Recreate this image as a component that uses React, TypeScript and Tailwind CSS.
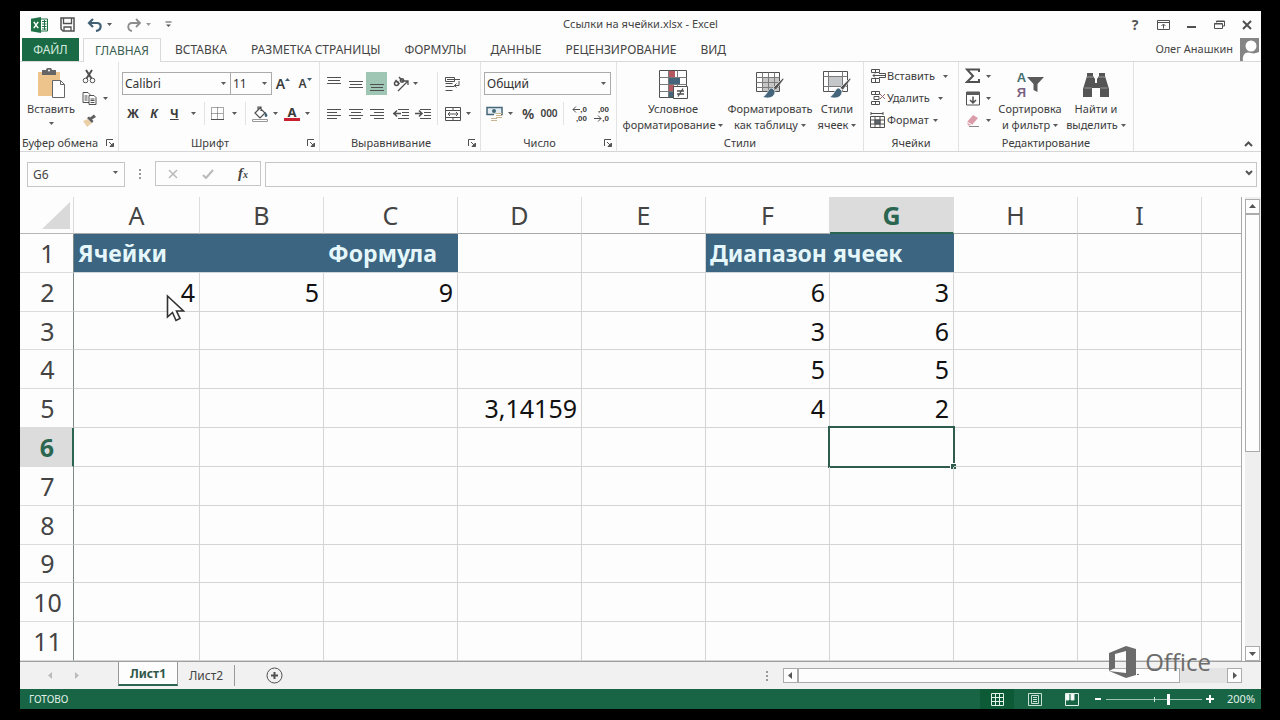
import React from 'react';
import clsx from 'clsx';

const Caret = ({ className }: { className?: string }) => (
  <svg viewBox="0 0 5 3" className={clsx('h-[3px] w-[5px] shrink-0 fill-[#5a5a5a]', className)}>
    <path d="M0 0h5L2.5 3z" />
  </svg>
);

const Icon = ({ w = 16, h = 16, children }: { w?: number; h?: number; children: React.ReactNode }) => (
  <svg width={w} height={h} viewBox={`0 0 ${w} ${h}`} fill="none" stroke="#505050" className="shrink-0">
    {children}
  </svg>
);

interface ToolProps {
  label: string;
  className?: string;
  caret?: boolean;
  compact?: boolean;
  children: React.ReactNode;
}

const Tool = ({ label, className, caret, compact, children }: ToolProps) => (
  <button
    type="button"
    aria-label={label}
    className={clsx(
      'flex shrink-0 items-center',
      compact ? 'h-[22px]' : 'h-[23px]',
      caret ? 'justify-between' : 'justify-center',
      className ?? 'w-[22px]',
    )}
  >
    {children}
    {caret && <Caret />}
  </button>
);

const Divider = () => <span className="h-[23px] w-px shrink-0 bg-[#e3e3e3]" />;

interface GroupProps {
  label: string;
  className: string;
  launcher?: boolean;
  children: React.ReactNode;
}

const Group = ({ label, className, launcher, children }: GroupProps) => (
  <section aria-label={label} className={clsx('relative flex shrink-0 flex-col border-r border-[#e2e2e2]', className)}>
    <div className="flex-1">{children}</div>
    <div className={clsx('flex h-4 items-center justify-center whitespace-nowrap', launcher && 'pr-[18px]')}>{label}</div>
    {launcher && (
      <button type="button" aria-label={`${label}: параметры`} className="absolute right-1 bottom-1">
        <Icon w={8} h={8}>
          <path d="M.5 7V.5H7M3 3l3 3" />
          <path d="M7.500 4v3.500H4z" fill="#5a5a5a" />
        </Icon>
      </button>
    )}
  </section>
);

const Combo = ({ label, value, className }: { label: string; value: string; className: string }) => (
  <div className={clsx('relative h-[23px] shrink-0', className)}>
    <select
      aria-label={label}
      className="h-full w-full appearance-none border border-[#ababab] bg-[#fdfdfd] pl-[2px] text-[12px] text-[#333] outline-none"
    >
      <option>{value}</option>
    </select>
    <Caret className="pointer-events-none absolute top-[10px] right-[5px]" />
  </div>
);

const BigButton = ({ lines, caret, className, children }: { lines: [string, string]; caret?: boolean; className: string; children: React.ReactNode }) => (
  <button type="button" className={clsx('flex shrink-0 flex-col items-center whitespace-nowrap', className)}>
    <span className="flex h-8 items-center">{children}</span>
    <span className="leading-4">{lines[0]}</span>
    <span className="flex items-center gap-[3px] leading-4">
      {lines[1]}
      {caret && <Caret />}
    </span>
  </button>
);

const Lines = ({ rows }: { rows: [number, number, number][] }) => (
  <Icon w={14} h={14}>
    {rows.map(([y, x1, x2]) => (
      <path key={y} d={`M${x1} ${y}H${x2}`} />
    ))}
  </Icon>
);

const ExcelIcon = () => (
  <svg width="17" height="16" viewBox="0 0 17 16">
    <path d="M9 2h7.500v12H9z" fill="#fff" stroke="#1f7246" />
    <path d="M11 4.500h4.500M11 7h4.500M11 9.500h4.500M11 12h4.500M13.500 3v10" stroke="#1f7246" />
    <path d="M0 1.800 10 0v16L0 14.200z" fill="#1f7246" />
    <path d="m2.800 4.800 4.400 6.400M7.200 4.800l-4.400 6.400" stroke="#fff" strokeWidth="1.500" />
  </svg>
);

const TitleBar = () => (
  <header className="relative flex h-[27px] shrink-0 items-center justify-between">
    <div className="flex items-center pl-[11px]">
      <ExcelIcon />
      <button type="button" aria-label="Сохранить" className="ml-3">
        <Icon w={15} h={15}>
          <path d="M1 1h13v13H3l-2-2z" strokeWidth="1.500" />
          <path d="M3.500 1v5.500h8V1M4 14v-4h7v4" strokeWidth="1.300" />
        </Icon>
      </button>
      <button type="button" aria-label="Отменить" className="ml-3 flex items-center gap-1">
        <svg width="16" height="14" viewBox="0 0 16 14" fill="none" stroke="#3f6075" strokeWidth="2.200">
          <path d="M6 1 2 5l4 4M2.500 5H10c5 0 5 7-1 8" />
        </svg>
        <Caret />
      </button>
      <button type="button" aria-label="Вернуть" className="ml-[14px] flex items-center gap-1">
        <svg width="16" height="14" viewBox="0 0 16 14" fill="none" stroke="#8c8c8c" strokeWidth="1.800">
          <path d="m10 1 4 4-4 4M13.500 5H6C1 5 1 12 6 13" />
        </svg>
        <Caret className="opacity-60" />
      </button>
      <button type="button" aria-label="Настройка панели" className="ml-[14px]">
        <Icon w={7} h={7}>
          <path d="M.5 1h6" />
          <path d="M1 3.500h5L3.500 6z" fill="#5a5a5a" stroke="none" />
        </Icon>
      </button>
    </div>
    <h1 className="pointer-events-none absolute inset-x-0 text-center text-[11px] text-[#444]">Ссылки на ячейки.xlsx - Excel</h1>
    <div className="flex">
      <Tool label="Справка" className="w-7 text-[14px] font-bold text-[#555]">?</Tool>
      <Tool label="Параметры отображения ленты" className="w-7">
        <Icon w={13} h={10}>
          <path d="M.5.5h12v9H.5zM.5 2.500h12M6.500 8.500v-4M4.500 6l2-2 2 2" />
        </Icon>
      </Tool>
      <Tool label="Свернуть" className="w-7">
        <Icon w={9} h={8}><path d="M0 6h9" strokeWidth="2" /></Icon>
      </Tool>
      <Tool label="Восстановить" className="w-7">
        <Icon w={11} h={9}><path d="M2.500 2.500V1h8v5H8.500M.5 3.500h8v5h-8zM.5 4h8M2.500 1.500h8" /></Icon>
      </Tool>
      <Tool label="Закрыть" className="w-7">
        <Icon w={10} h={10}><path d="m1 1 8 8M9 1 1 9" strokeWidth="2" /></Icon>
      </Tool>
    </div>
  </header>
);

const tabs = ['ВСТАВКА', 'РАЗМЕТКА СТРАНИЦЫ', 'ФОРМУЛЫ', 'ДАННЫЕ', 'РЕЦЕНЗИРОВАНИЕ', 'ВИД'];

const RibbonTabs = () => (
  <nav className="flex h-6 shrink-0 items-stretch border-b border-[#d9d9d9] pl-[2px] text-[12px] text-[#444]">
    <button type="button" className="w-[57px] bg-[#1a6b45] text-[#d5eadf]">ФАЙЛ</button>
    <button type="button" className="mr-[2px] -mb-px ml-1 w-[78px] border border-b-0 border-[#d9d9d9] bg-[#fdfdfd] text-[#3b5f50]">ГЛАВНАЯ</button>
    {tabs.map((tab) => (
      <button key={tab} type="button" className="px-3">{tab}</button>
    ))}
    <div className="ml-auto flex items-center gap-[7px] pr-[2px] text-[11px]">
      Олег Анашкин
      <svg width="19" height="23" viewBox="0 0 19 23">
        <path d="M0 0h19v23H0z" fill="#858585" />
        <circle cx="11" cy="8" r="5.500" fill="#fff" />
        <path d="M3 23c-1-7 3-10 8-8 3 1 5 0 8-1v9z" fill="#fff" />
      </svg>
    </div>
  </nav>
);

const ClipboardGroup = () => (
  <Group label="Буфер обмена" className="w-[99px]" launcher>
    <div className="flex pt-[3px]">
      <button type="button" className="flex w-[62px] flex-col items-center pt-[3px]">
        <svg width="29" height="32" viewBox="0 0 29 32">
          <path d="M1 4h22v24H1z" fill="#ecc48c" />
          <path d="M5 2h4c0-3 6-3 6 0h4v5H5z" fill="#666" />
          <circle cx="12" cy="2.500" r="1" fill="#fff" />
          <path d="M15.500 12.500h8l4 4v13h-12z" fill="#fff" stroke="#666" />
          <path d="M23.500 12.500v4h4" fill="none" stroke="#666" />
        </svg>
        <span className="leading-[18px]">Вставить</span>
        <Caret className="mt-1" />
      </button>
      <div className="flex flex-col">
        <Tool label="Вырезать" className="w-[14px]" compact>
          <Icon w={14} h={15}>
            <path d="M4 1l5.500 8.500M10 1 4.500 9.500" strokeWidth="2" />
            <circle cx="3.500" cy="11.500" r="2.300" />
            <circle cx="10.500" cy="11.500" r="2.300" />
          </Icon>
        </Tool>
        <Tool label="Копировать" className="w-[26px]" caret compact>
          <Icon w={15} h={13}>
            <path d="M1 .5h5l2 2v8H1zM2.500 4h3M2.500 6h3M2.500 8h3" />
            <path d="M7 3.500h5l2 2v7H7z" fill="#fdfdfd" />
            <path d="M8.500 7h4M8.500 8.500h4M8.500 10.500h4" />
          </Icon>
        </Tool>
        <Tool label="Формат по образцу" className="w-[14px]" compact>
          <Icon w={15} h={13}>
            <path d="M1 7l5-2 4 4-5 4z" fill="#ecd0a8" stroke="none" />
            <path d="m5 4 5 5 1.500-2L10 5.500 14 3l-2-2.500-4 3L7 2.500z" fill="#5f5f5f" stroke="none" />
          </Icon>
        </Tool>
      </div>
    </div>
  </Group>
);

const FontGroup = () => (
  <Group label="Шрифт" className="w-[201px]" launcher>
    <div className="flex flex-col gap-[7px] pt-[10px] pl-[3px]">
      <div className="flex">
        <Combo label="Гарнитура" value="Calibri" className="w-[109px]" />
        <Combo label="Размер шрифта" value="11" className="-ml-px w-[42px]" />
        <Tool label="Увеличить размер">
          <span className="text-[14px] font-semibold">A</span>
          <Icon w={5} h={12}><path d="M0 3h5L2.500 0z" fill="#3f6075" stroke="none" /></Icon>
        </Tool>
        <Tool label="Уменьшить размер">
          <span className="text-[12px] font-semibold">A</span>
          <Icon w={5} h={12}><path d="M0 0h5L2.500 3z" fill="#3f6075" stroke="none" /></Icon>
        </Tool>
      </div>
      <div className="flex items-center text-[12px] font-bold">
        <Tool label="Полужирный">Ж</Tool>
        <Tool label="Курсив" className="w-5 italic">К</Tool>
        <Tool label="Подчеркнутый" className="ml-[6px] w-[26px] underline" caret>Ч</Tool>
        <span className="w-2" />
        <Divider />
        <Tool label="Границы" className="ml-[6px] w-[26px]" caret>
          <Icon w={13} h={13}>
            <path d="M.5.5h12v12H.5zM6.500.5v12M.5 6.500h12" strokeDasharray="1 1" />
            <path d="M0 12.500h13" />
          </Icon>
        </Tool>
        <span className="w-2" />
        <Divider />
        <Tool label="Цвет заливки" className="ml-[6px] w-[26px]" caret>
          <Icon w={17} h={16}>
            <path d="m3 7 5-5 5 5-5 5zM6 4V1h3v4" strokeWidth="1.200" />
            <path d="M13 6c3 2 3 5 1 5s-1-3-1-5z" fill="#3f6075" stroke="none" />
            <path d="M.5 13.500h15v2H.5z" fill="#fff" stroke="#999" />
          </Icon>
        </Tool>
        <Tool label="Цвет текста" className="ml-[6px] w-[26px]" caret>
          <span className="flex w-4 flex-col items-center">
            <span className="h-3 text-[13px] leading-3">А</span>
            <span className="h-[3px] w-4 bg-[#c8202f]" />
          </span>
        </Tool>
      </div>
    </div>
  </Group>
);

const AlignmentGroup = () => (
  <Group label="Выравнивание" className="w-[161px]" launcher>
    <div className="flex pt-[10px] pl-[3px]">
      <div className="flex flex-col gap-[7px]">
        <div className="flex">
          <Tool label="По верхнему краю"><Lines rows={[[0.5, 0, 14], [3.5, 1, 13], [6.5, 0, 14]]} /></Tool>
          <Tool label="По середине" className="w-[21px]"><Lines rows={[[4.5, 0, 14], [7.5, 1, 13], [10.5, 0, 14]]} /></Tool>
          <Tool label="По нижнему краю" className="w-[21px] bg-[#9fc6b5]"><Lines rows={[[7.5, 0, 14], [10.5, 1, 13], [13.5, 0, 14]]} /></Tool>
          <Tool label="Ориентация" className="ml-[6px] w-[25px]" caret>
            <Icon w={17} h={16}>
              <path d="M5 15 15 5M15 9V5h-4" strokeWidth="1.300" />
              <circle cx="3.500" cy="7.500" r="2" strokeWidth="1.500" />
              <path d="M2.500 4 6.500 8M6 1l4.500 5" strokeWidth="1.500" />
              <circle cx="9" cy="4.500" r="1.700" strokeWidth="1.500" />
            </Icon>
          </Tool>
        </div>
        <div className="flex">
          <Tool label="По левому краю"><Lines rows={[[2.5, 0, 14], [5.5, 0, 10], [8.5, 0, 14], [11.5, 0, 10]]} /></Tool>
          <Tool label="По центру" className="w-[21px]"><Lines rows={[[2.5, 0, 14], [5.5, 2, 12], [8.5, 0, 14], [11.5, 2, 12]]} /></Tool>
          <Tool label="По правому краю" className="w-[21px]"><Lines rows={[[2.5, 0, 14], [5.5, 4, 14], [8.5, 0, 14], [11.5, 4, 14]]} /></Tool>
          <Tool label="Уменьшить отступ" className="ml-[3px] w-[22px]">
            <Icon><path d="M5 3.500h11M9 6.500h7M9 9.500h7M5 12.500h11" /><path d="M0 7.500h8M4 4.500l-3 3 3 3" strokeWidth="1.500" /></Icon>
          </Tool>
          <Tool label="Увеличить отступ" className="w-[22px]">
            <Icon><path d="M5 3.500h11M9 6.500h7M9 9.500h7M5 12.500h11" /><path d="M0 7.500h7M4 4.500l3 3-3 3" strokeWidth="1.500" /></Icon>
          </Tool>
        </div>
      </div>
      <span className="ml-[3px] h-[53px] w-px bg-[#e3e3e3]" />
      <div className="ml-[7px] flex flex-col gap-[7px]">
        <Tool label="Перенести текст" className="w-4">
          <Icon>
            <path d="M.5 1.500h9v4h-9zM.5 7.500h7M.5 10.500h9M.5 14.500h7M2 3.500h13M9.500 9.500h4.500V5M11.500 7.500l-2 2 2 2" />
          </Icon>
        </Tool>
        <Tool label="Объединить" className="w-[26px]" caret>
          <Icon><path d="M.5 1.500h15v13H.5zM.5 4.500h15M.5 11.500h15M8 1.500v3M8 11.500v3M3 8h10M5 6 3 8l2 2M11 6l2 2-2 2" /></Icon>
        </Tool>
      </div>
    </div>
  </Group>
);

const NumberGroup = () => (
  <Group label="Число" className="w-[136px]" launcher>
    <div className="flex flex-col gap-[7px] pt-[10px] pl-[3px]">
      <Combo label="Числовой формат" value="Общий" className="w-[127px]" />
      <div className="flex items-center">
        <Tool label="Финансовый формат" className="ml-[2px] w-[27px]" caret>
          <Icon w={17} h={16}>
            <path d="M1 1.500h15v7H1z" fill="#e4eef2" stroke="#456779" strokeWidth="1.500" />
            <circle cx="8" cy="5" r="2" fill="#456779" stroke="none" />
            <path d="M8 8h7v7H8z" fill="#fdfdfd" stroke="none" />
            <path d="M10 7.500h6M10 9.500h6M10 11.500h6M5 12.500h6M5 14.500h6" stroke="#c9b591" />
          </Icon>
        </Tool>
        <Tool label="Процентный формат" className="ml-1 w-[22px] text-[14px] font-semibold">%</Tool>
        <Tool label="Формат с разделителями" className="w-5 text-[10px] font-semibold">000</Tool>
        <span className="w-1" />
        <Divider />
        <span className="w-1" />
        <Tool label="Увеличить разрядность">
          <span className="flex w-4 flex-col items-end font-['Liberation_Sans',sans-serif] text-[8px] leading-[9px] font-bold">
            <span className="flex items-center">
              <Icon w={8} h={7}><path d="M1 3.500h7M4 .5l-3 3 3 3" /></Icon>,0
            </span>
            <span>,00</span>
          </span>
        </Tool>
        <Tool label="Уменьшить разрядность">
          <span className="flex w-4 flex-col items-end font-['Liberation_Sans',sans-serif] text-[8px] leading-[9px] font-bold">
            <span>,00</span>
            <span className="flex items-center">
              <Icon w={8} h={7}><path d="M0 3.500h7M4 .5l3 3-3 3" /></Icon>,0
            </span>
          </span>
        </Tool>
      </div>
    </div>
  </Group>
);

const Brush = () => (
  <>
    <path d="m28 8-8 11-3-2L27 7z" fill="#555" stroke="#fdfdfd" strokeWidth=".6" />
    <path d="M16 17c-4 0-4 6-9 9 5 2 12 1 12-6z" fill="#44657a" stroke="#fdfdfd" strokeWidth=".6" />
  </>
);

const StylesGroup = () => (
  <Group label="Стили" className="w-[247px]">
    <div className="flex pt-[7px] pl-1">
      <BigButton lines={['Условное', 'форматирование']} caret className="w-[104px]">
        <Icon w={29} h={30}>
          <path d="M.5.5h27v27H.5z" fill="#fff" />
          <path d="M9.500.5v27M18.500.5v27M.5 7.500h27M.5 14.500h27M.5 21.500h27" stroke="#7a7a7a" />
          <path d="M10 1h6v6h-6zM10 15h5v6h-5z" fill="#b5585f" stroke="none" />
          <path d="M10 8h11v6H10zM10 22h4v5h-4z" fill="#44657a" stroke="none" />
          <path d="M14.500 16.500h14v12h-14z" fill="#fff" />
          <path d="M18 21h7M18 24h7M24 18.500l-5 8" strokeWidth="1.300" />
        </Icon>
      </BigButton>
      <BigButton lines={['Форматировать', 'как таблицу']} caret className="w-[90px]">
        <Icon w={29} h={28}>
          <path d="M.5 1.500h23v19H.5z" fill="#fff" />
          <path d="M7 7h16v13H7z" fill="#c6c6c6" stroke="none" />
          <path d="M6.500 1.500v19M12.500 1.500v19M18.500 1.500v19M.5 6.500h23M.5 11.500h23M.5 16.500h23" stroke="#7a7a7a" />
          <Brush />
        </Icon>
      </BigButton>
      <BigButton lines={['Стили', 'ячеек']} caret className="w-[44px]">
        <Icon w={29} h={28}>
          <path d="M.5.5h24v20H.5z" fill="#fff" />
          <path d="M5 5h15v11H5z" fill="#c4c8cb" stroke="none" />
          <path d="M5.500.5v20M19.500.5v20M.5 5.500h24M.5 15.500h24" stroke="#7a7a7a" />
          <Brush />
        </Icon>
      </BigButton>
    </div>
  </Group>
);

const CellsButton = ({ label, gap, children }: { label: string; gap: string; children: React.ReactNode }) => (
  <button type="button" className="flex h-[22px] items-center">
    <Icon>{children}</Icon>
    <span className={clsx('ml-px', gap)}>{label}</span>
    <Caret />
  </button>
);

const CellsGroup = () => (
  <Group label="Ячейки" className="w-[95px]">
    <div className="flex flex-col items-start pt-[3px] pl-[6px]">
      <CellsButton label="Вставить" gap="mr-2">
        <path d="M1.500 1.500h8v3h-8zM5.500 1.500v3M1.500 10.500h8v4h-8zM5.500 10.500v4M6 7.500h9.500M9 5.500h6.500v4H9M3 7.500h3M5 5.500l-2 2 2 2" />
      </CellsButton>
      <CellsButton label="Удалить" gap="mr-2">
        <path d="M1.500 1.500h8v3h-8zM5.500 1.500v3M1.500 11.500h8v3h-8zM5.500 11.500v3M4 6.500h5v3H4z" />
        <path d="m10 4 5 5M15 4l-5 5" stroke="#a0676b" />
      </CellsButton>
      <CellsButton label="Формат" gap="mr-1">
        <path d="M1 1.500h12M1 0v3M13 0v3M.5 4.500h14v11H.5zM.5 8h14M.5 12h14M5 4.500v11M10 4.500v11" />
        <path d="M5 8h5v4H5z" fill="#5a6670" />
      </CellsButton>
    </div>
  </Group>
);

const EditingGroup = () => (
  <Group label="Редактирование" className="w-[175px]">
    <div className="flex">
      <div className="flex flex-col pt-[3px] pl-[6px]">
        <Tool label="Сумма" className="w-[26px]" caret compact>
          <Icon w={16} h={16}><path d="M14 4V1.500H2L8 8l-6 6h12V11" strokeWidth="2" /></Icon>
        </Tool>
        <Tool label="Заполнить" className="w-[26px]" caret compact>
          <Icon w={16} h={15}>
            <path d="M1.500 1h13v13h-13z" />
            <path d="M1 1h14v3H1z" fill="#5a5a5a" stroke="none" />
            <path d="M8 5.500V12M5 9l3 3 3-3" strokeWidth="1.500" />
          </Icon>
        </Tool>
        <Tool label="Очистить" className="w-[26px]" caret compact>
          <Icon w={16} h={13}>
            <path d="m2 8 6-7 5 3-6 7-4 .5z" fill="#dc9dab" stroke="none" />
            <path d="m2 8 5 3" stroke="#fff" />
            <path d="M4 12.500h10" stroke="#888" />
          </Icon>
        </Tool>
      </div>
      <div className="flex pt-[7px] pl-[6px]">
        <BigButton lines={['Сортировка', 'и фильтр']} caret className="w-[66px]">
          <span className="flex items-center font-['Liberation_Sans',sans-serif] text-[13px] leading-[15px] font-bold">
            <span className="flex w-[10px] flex-col">
              <span className="text-[#44706f]">A</span>
              <span className="text-[#7b5f82]">Я</span>
            </span>
            <svg width="17" height="20" viewBox="0 0 17 20" fill="#5a5a5a">
              <path d="M0 2h17l-6.500 7v8l-4-2V9z" />
            </svg>
          </span>
        </BigButton>
        <BigButton lines={['Найти и', 'выделить']} caret className="w-[66px]">
          <svg width="26" height="24" viewBox="0 0 26 24" fill="#555">
            <path d="M4 3V0h6v3l2 3v4h2V6l2-3V0h6v3l4 13v8h-9v-9h-8v9H0v-8z" />
            <path d="M4 4h6M16 4h6M1.500 15h7M17.500 15h7" stroke="#999" />
          </svg>
        </BigButton>
      </div>
    </div>
  </Group>
);

const Ribbon = () => (
  <div className="relative flex h-[90px] shrink-0 border-b border-[#d6d6d6] text-[11px] text-[#3c3c3c]">
    <ClipboardGroup />
    <FontGroup />
    <AlignmentGroup />
    <NumberGroup />
    <StylesGroup />
    <CellsGroup />
    <EditingGroup />
    <button type="button" aria-label="Свернуть ленту" className="absolute right-2 bottom-1">
      <Icon w={9} h={6}><path d="m1 5 3.500-3.500L8 5" strokeWidth="2" /></Icon>
    </button>
  </div>
);

const FormulaBar = () => (
  <div className="flex h-[45px] shrink-0 items-start pt-[9px] pr-1 pl-[7px]">
    <div className="relative h-[25px] w-[98px]">
      <input
        aria-label="Имя"
        defaultValue="G6"
        className="h-full w-full border border-[#c6c6c6] bg-[#fdfdfd] pl-[5px] text-[12px] text-[#444] outline-none"
      />
      <Caret className="absolute top-[10px] right-[6px] h-1 w-[7px]" />
    </div>
    <svg width="2" height="10" viewBox="0 0 2 10" className="mx-[14px] mt-2 fill-[#999]">
      <path d="M0 0h2v2H0zM0 4h2v2H0zM0 8h2v2H0z" />
    </svg>
    <div className="flex h-[25px] w-[106px] items-center justify-around border border-[#c6c6c6]">
      <button type="button" aria-label="Отмена">
        <Icon w={10} h={10}><path d="m1 1 8 8M9 1 1 9" stroke="#b9b9b9" strokeWidth="1.500" /></Icon>
      </button>
      <button type="button" aria-label="Ввод">
        <Icon w={12} h={10}><path d="m1 6 3 3 7-8" stroke="#b9b9b9" strokeWidth="2" /></Icon>
      </button>
      <button type="button" aria-label="Вставить функцию" className="font-['Liberation_Serif',serif] text-[15px] leading-4 font-bold text-[#444] italic">
        f<span className="text-[10px]">x</span>
      </button>
    </div>
    <div className="relative ml-1 h-[25px] flex-1">
      <input aria-label="Строка формул" className="h-full w-full border border-[#c6c6c6] bg-[#fdfdfd] px-2 text-[12px] outline-none" />
      <svg width="8" height="6" viewBox="0 0 8 6" className="absolute top-[9px] right-1 fill-none stroke-[#555] stroke-2">
        <path d="m1 1 3 3 3-3" />
      </svg>
    </div>
  </div>
);

const columns = ['A', 'B', 'C', 'D', 'E', 'F', 'G', 'H', 'I'];

const values: Record<string, string> = {
  A2: '4',
  B2: '5',
  C2: '9',
  D5: '3,14159',
  F2: '6',
  F3: '3',
  F4: '5',
  F5: '4',
  G2: '3',
  G3: '6',
  G4: '5',
  G5: '2',
};

const band = 'border-b border-[#cfd6da] bg-[#3b6581] pl-1 text-left text-[23px] font-bold whitespace-nowrap text-[#e6f7fb]';
const plain = 'border-r border-b border-[#d4d4d4]';

const rowHead = (row: number) => (
  <th
    scope="row"
    className={clsx(
      'border-r border-b border-b-[#dcdcdc] pl-[2px]',
      row === 6 ? 'border-r-2 border-r-[#2b6650] bg-[#dcdcdc] font-bold text-[#2b6650]' : 'border-r-[#7f8a87] font-normal text-[#444]',
    )}
  >
    {row}
  </th>
);

const Sheet = () => (
  <div className="relative min-w-0 flex-1 border-r border-[#a9a9a9]">
    <table className="h-full w-full table-fixed border-separate border-spacing-0 text-[25px] leading-8 text-[#111]">
      <colgroup>
        <col className="w-[54px]" />
        <col className="w-[126px]" />
        <col className="w-[124px]" />
        <col className="w-[134px]" />
        <col className="w-[124px]" />
        <col className="w-[124px]" />
        <col className="w-[124px]" />
        <col className="w-[124px]" />
        <col className="w-[124px]" />
        <col className="w-[124px]" />
        <col />
      </colgroup>
      <thead>
        <tr className="h-[37px] text-[#444]">
          <th aria-label="Выделить все" className="border-r border-b border-r-[#dcdcdc] border-b-[#b5b5b5] pr-[3px]">
            <svg width="28" height="27" viewBox="0 0 28 27" className="ml-auto fill-[#d9d9d9]">
              <path d="M28 0v27H0z" />
            </svg>
          </th>
          {columns.map((c) => (
            <th
              key={c}
              scope="col"
              className={clsx(
                'border-r border-b border-r-[#dcdcdc]',
                c === 'G' ? 'border-b-2 border-b-[#2b6650] bg-[#dcdcdc] font-bold text-[#2b6650]' : 'border-b-[#a9a9a9] font-normal',
              )}
            >
              {c}
            </th>
          ))}
          <th className="border-b border-b-[#a9a9a9]" />
        </tr>
      </thead>
      <tbody>
        <tr>
          {rowHead(1)}
          <td className={band}>Ячейки</td>
          <td className={band} />
          <td className={band}>Формула</td>
          <td className={plain} />
          <td className={plain} />
          <td colSpan={2} className={band}>Диапазон ячеек</td>
          <td className={plain} />
          <td className={plain} />
          <td className="border-b border-[#d4d4d4]" />
        </tr>
        {[2, 3, 4, 5, 6, 7, 8, 9, 10, 11].map((row) => (
          <tr key={row}>
            {rowHead(row)}
            {columns.map((c) => (
              <td key={c} className={clsx(plain, 'relative pr-1 text-right')}>
                {values[`${c}${row}`]}
                {c === 'G' && row === 6 && (
                  <span className="absolute -inset-[2px] border-2 border-[#2f5d4c]">
                    <span className="absolute -right-[3px] -bottom-[3px] size-[6px] border-t border-l border-white bg-[#2f5d4c]" />
                  </span>
                )}
              </td>
            ))}
            <td className="border-b border-[#d4d4d4]" />
          </tr>
        ))}
      </tbody>
    </table>
    {/* mouse pointer */}
    <svg width="19" height="28" viewBox="0 0 19 28" className="absolute top-[97px] left-[146px]">
      <path d="M1.500 2v21l5-4.500 3.500 8 4-2-3.500-7.500h7z" fill="#fff" stroke="#333" strokeWidth="1.600" />
    </svg>
  </div>
);

const ScrollArrow = ({ label, d }: { label: string; d: string }) => (
  <button type="button" aria-label={label} className="flex size-[15px] shrink-0 items-center justify-center border border-[#ababab] bg-[#fdfdfd]">
    <svg width="7" height="7" viewBox="0 0 7 7" className="fill-[#555]"><path d={d} /></svg>
  </button>
);

const SheetBar = () => (
  <div className="flex h-7 shrink-0 items-stretch border-t border-[#a0a0a0] bg-[#f1f1f1] text-[12px] text-[#444]">
    <div className="flex w-[98px] items-center gap-[22px] pl-[28px]">
      <svg width="5" height="7" viewBox="0 0 5 7" className="fill-[#bbb]"><path d="M4 0v7L0 3.500z" /></svg>
      <svg width="5" height="7" viewBox="0 0 5 7" className="fill-[#bbb]"><path d="M0 0v7l4-3.500z" /></svg>
    </div>
    <button type="button" className="mb-[3px] w-[60px] border-x border-b-2 border-x-[#999] border-b-[#2b6650] bg-[#fdfdfd] pt-[2px] font-bold text-[#2f5848]">Лист1</button>
    <button type="button" className="my-[3px] w-[57px] border-r border-[#999]">Лист2</button>
    <button type="button" aria-label="Новый лист" className="ml-[31px]">
      <Icon w={17} h={17}>
        <circle cx="8.500" cy="8.500" r="7.500" />
        <path d="M8.500 5v7M5 8.500h7" strokeWidth="2" />
      </Icon>
    </button>
    <div className="ml-auto flex w-[495px] items-center pr-[19px]">
      <svg width="2" height="10" viewBox="0 0 2 10" className="mr-[15px] fill-[#999]">
        <path d="M0 0h2v2H0zM0 4h2v2H0zM0 8h2v2H0z" />
      </svg>
      <ScrollArrow label="Влево" d="M5 0v7L1 3.500z" />
      <div className="flex flex-1 bg-[#e4e4e4]">
        <div className="h-[15px] w-[382px] border border-[#ababab] bg-[#fdfdfd]" />
      </div>
      <ScrollArrow label="Вправо" d="M2 0v7l4-3.500z" />
    </div>
  </div>
);

const StatusBar = () => (
  <footer className="flex h-5 shrink-0 items-center bg-[#176544] pr-[7px] pl-[9px] text-[11px] text-[#e2f1ea]">
    <span className="mr-auto text-[10px]">ГОТОВО</span>
    <button type="button" aria-label="Обычный" className="flex h-5 w-[34px] items-center justify-center bg-[#0d5a36]">
      <svg width="13" height="13" viewBox="0 0 13 13" className="fill-none stroke-[#e2f1ea]"><path d="M.5.5h12v12H.5zM4.500.5v12M8.500.5v12M.5 4.500h12M.5 8.500h12" /></svg>
    </button>
    <button type="button" aria-label="Разметка страницы" className="ml-[14px]">
      <svg width="14" height="13" viewBox="0 0 14 13" className="fill-none stroke-[#c9e0d5]"><path d="M.5.5h13v12H.5zM3.500 2.500h7v8h-7zM5 4.500h4M5 6.500h4M5 8.500h4" /></svg>
    </button>
    <button type="button" aria-label="Страничный режим" className="ml-[23px]">
      <svg width="14" height="13" viewBox="0 0 14 13" className="fill-none stroke-[#e2f1ea]"><path d="M.5.5h13v12H.5z" /><path d="M1 1h3v6H1zM6 1h3v6H6z" fill="#fff" /></svg>
    </button>
    <button type="button" aria-label="Уменьшить масштаб" className="ml-4 w-[7px]">
      <svg width="6" height="6" viewBox="0 0 6 6" className="stroke-white stroke-2"><path d="M0 3h6" /></svg>
    </button>
    <div className="relative mx-1 flex h-5 w-[96px] items-center">
      <input
        type="range"
        aria-label="Масштаб"
        min={0}
        max={100}
        defaultValue={66}
        className="h-px w-full appearance-none bg-[#9fc4b3] outline-none [&::-webkit-slider-thumb]:h-[11px] [&::-webkit-slider-thumb]:w-[3px] [&::-webkit-slider-thumb]:appearance-none [&::-webkit-slider-thumb]:bg-white"
      />
      <span className="absolute left-1/2 h-[5px] w-px bg-[#cfe3da]" />
    </div>
    <button type="button" aria-label="Увеличить масштаб">
      <svg width="8" height="8" viewBox="0 0 8 8" className="stroke-white stroke-2"><path d="M0 4h8M4 0v8" /></svg>
    </button>
    <span className="ml-[13px] w-[27px] text-right">200%</span>
  </footer>
);

export default function App() {
  return (
    <div className="flex h-screen flex-col bg-black py-[11px] pr-[19px] pl-5 font-['Noto_Sans','Open_Sans',sans-serif]">
      <main className="relative flex min-h-0 flex-1 flex-col overflow-hidden bg-[#fdfdfd]">
        <TitleBar />
        <RibbonTabs />
        <Ribbon />
        <FormulaBar />
        <div className="flex min-h-0 flex-1">
          <Sheet />
          <div className="ml-[3px] flex w-4 flex-col bg-[#efefef] pt-[2px]">
            <ScrollArrow label="Вверх" d="M0 5h7L3.500 1z" />
            <div className="h-[238px] w-[15px] border border-[#ababab] bg-[#fdfdfd]" />
            <div className="flex-1" />
            <ScrollArrow label="Вниз" d="M0 2h7L3.500 6z" />
          </div>
        </div>
        <SheetBar />
        <StatusBar />
        {/* watermark */}
        <div className="pointer-events-none absolute right-[50px] bottom-[31px] flex items-center gap-[6px] text-[#6b6b6b]">
          <svg width="30" height="32" viewBox="0 0 30 32" fill="#6b6b6b">
            <path d="M0 7 17 0l10 3v26l-10 3L0 25l17 2V5L6 8v14l-6 3z" />
            <path d="M28 28h2v1h-2z" />
          </svg>
          <span className="font-['Open_Sans',sans-serif] text-[24px] leading-8">Office</span>
        </div>
      </main>
    </div>
  );
}
